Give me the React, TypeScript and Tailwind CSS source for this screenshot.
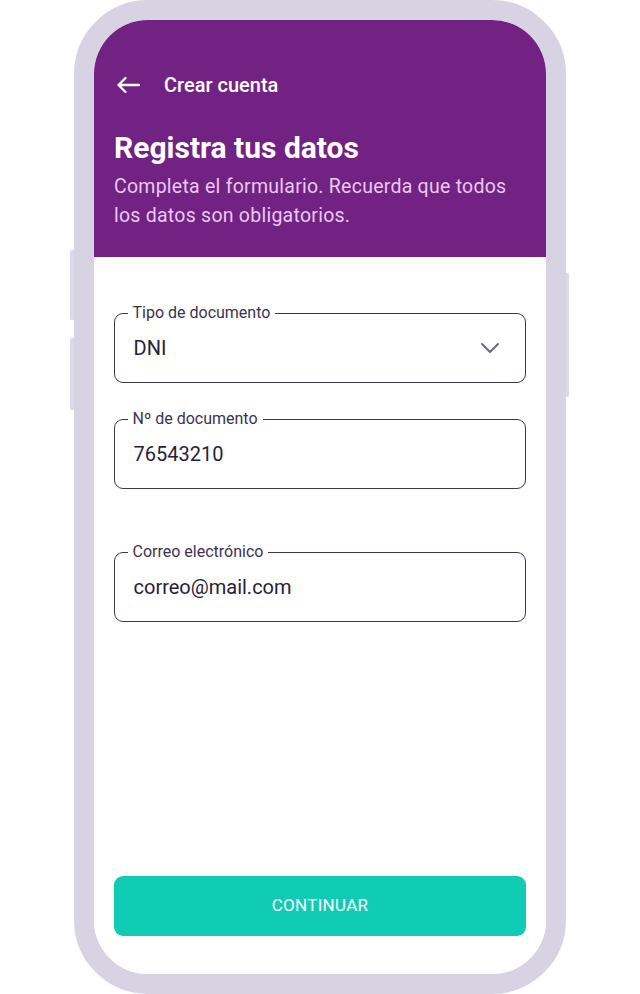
import React from 'react'

interface FieldProps {
  label: string
  value: string
  select?: boolean
  className?: string
}

function Field({ label, value, select, className }: FieldProps) {
  return (
    <fieldset className={`border-[1.5px] border-[#3d3556] rounded-[9px] pl-[18.5px] pr-[26px] ${className ?? ''}`}>
      <legend className="ml-[-6px] px-[5px] text-[16px] leading-[18px] text-[#3a334f]">{label}</legend>
      <div className="h-[60px] pb-[8px] flex items-center justify-between">
        <span className="text-[20px] text-[#27213a]">{value}</span>
        {select && (
          <svg width="20" height="12" viewBox="0 0 20 12" fill="none" className="mr-[-1px]">
            <path d="M2 2 L10 10 L18 2" stroke="#6e6882" strokeWidth="2" strokeLinecap="round" strokeLinejoin="round" />
          </svg>
        )}
      </div>
    </fieldset>
  )
}

export default function App() {
  return (
    <div className="w-[640px] h-[994px] bg-white flex justify-center font-['Roboto',sans-serif]">
      <div className="relative w-[492px] h-[994px] rounded-[74px] border-[20px] border-[#d7d3e3] bg-white">
        {/* side buttons */}
        <div className="absolute left-[-24px] top-[230px] w-[4px] h-[70px] bg-[#dcd9e7] rounded-l-[2px]" />
        <div className="absolute left-[-24px] top-[318px] w-[4px] h-[72px] bg-[#dcd9e7] rounded-l-[2px]" />
        <div className="absolute right-[-23px] top-[253px] w-[3px] h-[124px] bg-[#dcd9e7] rounded-r-[2px]" />

        <div className="h-full rounded-[54px] overflow-hidden flex flex-col bg-white">
          <div className="bg-[#722282] h-[237px] pl-[20px] pr-[20px] flex flex-col">
            <div className="flex items-center h-[30px] mt-[50px]">
              <svg width="24" height="18" viewBox="0 0 24 18" fill="none" className="ml-[2px]">
                <path d="M23 9H2.5 M9.5 2 L2.5 9 L9.5 16" stroke="white" strokeWidth="2.3" strokeLinecap="round" strokeLinejoin="round" />
              </svg>
              <span className="ml-[24px] text-white text-[20px] font-medium">Crear cuenta</span>
            </div>
            <h1 className="mt-[30px] text-white text-[30px] leading-[36px] font-bold">Registra tus datos</h1>
            <p className="mt-[6px] text-[#e9c9f0] text-[19.5px] leading-[29px] tracking-[0.25px]">
              Completa el formulario. Recuerda que todos los datos son obligatorios.
            </p>
          </div>

          <div className="flex-1 flex flex-col px-[20px] pt-[47px]">
            <Field label="Tipo de documento" value="DNI" select />
            <Field label="Nº de documento" value="76543210" className="mt-[27px]" />
            <Field label="Correo electrónico" value="correo@mail.com" className="mt-[54px]" />
            <div className="flex-1" />
            <button className="h-[60px] mb-[38px] rounded-[9px] bg-[#10ccb4] text-white text-[17px] tracking-[0.3px]">
              CONTINUAR
            </button>
          </div>
        </div>
      </div>
    </div>
  )
}
